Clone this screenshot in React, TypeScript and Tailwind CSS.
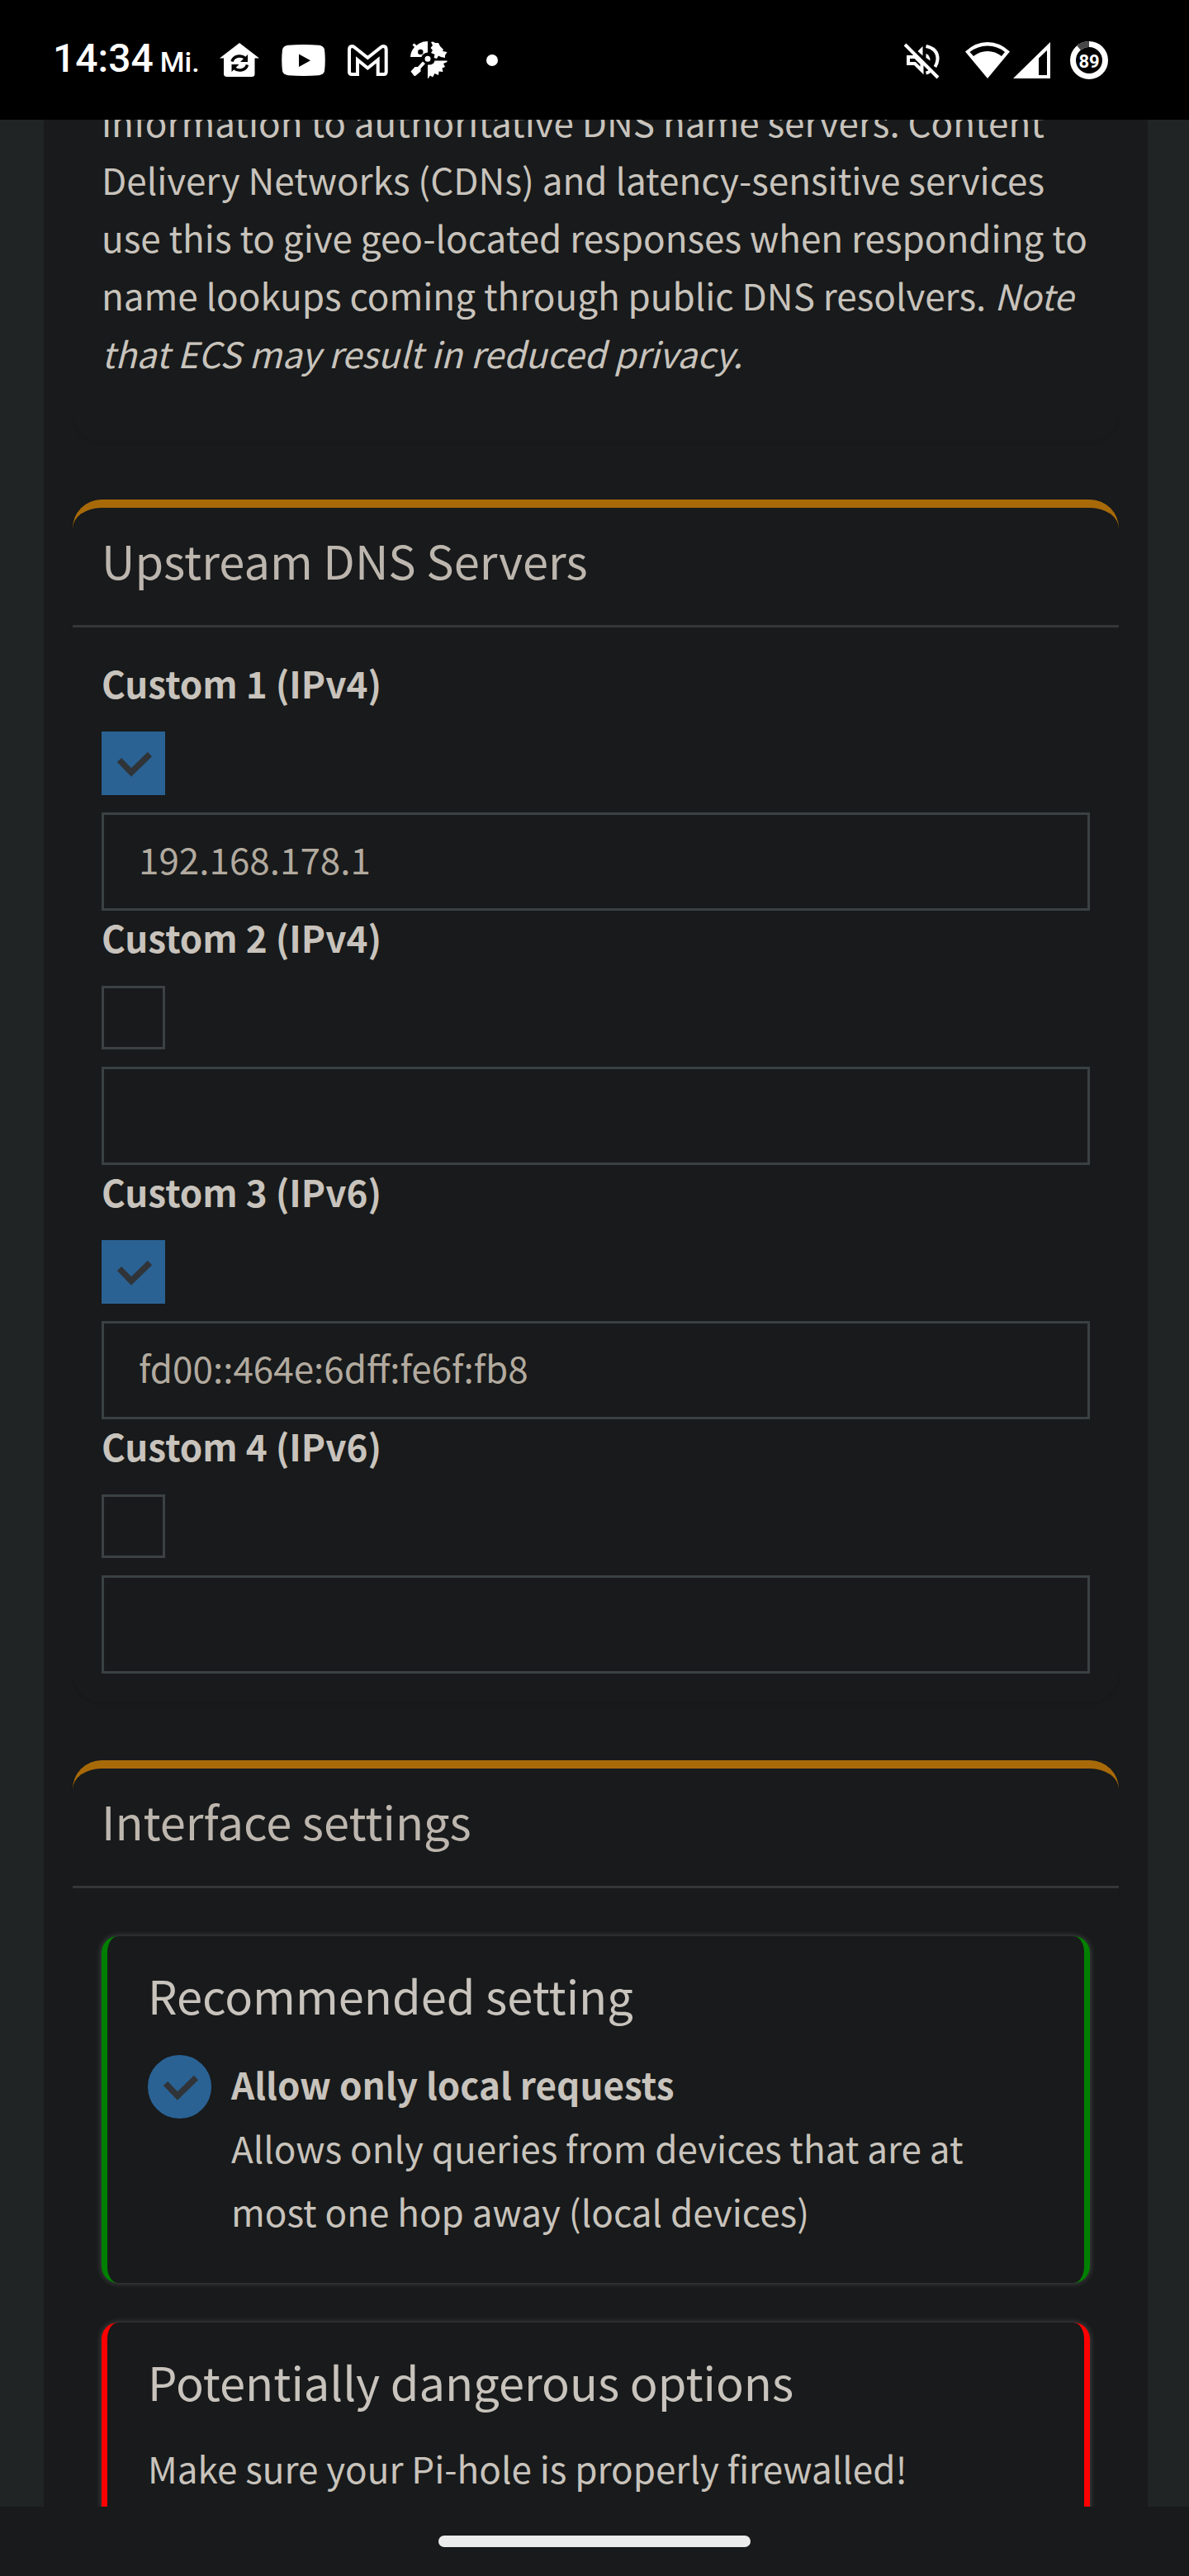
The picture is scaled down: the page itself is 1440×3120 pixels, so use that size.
import { useState } from "react"

type Upstream = { id: string, label: string, enabled: boolean, address: string }

const upstreams: Upstream[] = [
    { id: "custom1", label: "Custom 1 (IPv4)", enabled: true, address: "192.168.178.1" },
    { id: "custom2", label: "Custom 2 (IPv4)", enabled: false, address: "" },
    { id: "custom3", label: "Custom 3 (IPv6)", enabled: true, address: "fd00::464e:6dff:fe6f:fb8" },
    { id: "custom4", label: "Custom 4 (IPv6)", enabled: false, address: "" },
]

function CheckMark() {
    return (
        <svg className="pointer-events-none absolute inset-0 hidden peer-checked:block" viewBox="0 0 77 77" fill="none" aria-hidden="true">
            <path d="M21.5 34.5 36 49.5 58.5 27.5" stroke="#303438" strokeWidth="7.5" />
        </svg>
    )
}

function StatusBar() {
    return (
        <header className="flex h-[145px] shrink-0 items-center bg-black pl-16 pr-[98px] font-['Roboto',sans-serif] text-white">
            <div className="flex items-baseline gap-2 font-medium">
                <span className="text-[48px] leading-[56px]">14:34</span>
                <span className="text-[34px] leading-[56px]">Mi.</span>
            </div>

            {/* notifications */}
            <div className="ml-6 flex items-center gap-[27px]">
                <svg width="48" height="42" viewBox="0 0 48 42" aria-hidden="true">
                    <path d="M24 0 48 18.5H42.5V37.5Q42.5 41 39 41H9Q5 41 5 37.5V18.5H0Z" fill="#fff" />
                    <path d="M15 22.5A9.5 8.5 0 0 1 31 18.5M33.5 26.5A9.5 8.5 0 0 1 17.500 30.500" fill="none" stroke="#000" strokeWidth="3.5" />
                    <path d="M34 14V23H25ZM14.500 35V26H23.500Z" fill="#000" />
                </svg>
                <svg width="53" height="38" viewBox="0 0 53 38" aria-hidden="true">
                    <path d="M8 .8Q26.500-.8 45 .8Q51 1.500 52 6Q53.500 19 52 32Q51 36.500 45 37.200Q26.500 38.800 8 37.200Q2 36.500 1 32Q-.5 19 1 6Q2 1.500 8 .8Z" fill="#fff" />
                    <path d="M21 11.500 35 19.200 21 27Z" fill="#000" />
                </svg>
                <svg width="49" height="38" viewBox="0 0 49 38" fill="none" aria-hidden="true">
                    <path d="M12 18.500V36H5Q2 36 2 33V6Q2 2 5.500 2Q7 2 8.300 3.200L24.300 16 40.300 3.200Q41.700 2 43.200 2Q46.700 2 46.700 6V33Q46.700 36 43.700 36H36.700V18.500L24.300 28.500Z" stroke="#fff" strokeWidth="4" />
                </svg>
                <svg width="45" height="45" viewBox="0 0 45 45" fill="#fff" aria-hidden="true">
                    <path fillRule="evenodd" d="M21 0V13.500Q14.500 14.500 13.500 19H0Q.5 12 5 7L2.500 4.500 4.500 2.500 7.500 5Q13 0 21 0ZM12.300 9.700A3.200 3.200 0 1 0 12.300 16.100 3.200 3.200 0 1 0 12.300 9.700Z" />
                    <path d="M25 1Q28-.5 30 2L34 2 36 6 40 10 39 12 44.500 13 42 17 42 20 37 19 34 17.500 32 21 28.500 20 29.500 16 25 14 27 11 24.500 8 27 5Z" />
                    <circle cx="21" cy="21.300" r="3.500" />
                    <path d="M29.500 23.500H44.500V25L40 27 42 31 38.500 32.500 39.500 37 34.500 36.500 34 41 29.500 39 27 43.500 24 41.500 21.500 45H21V28.500Q28.500 29 29.500 23.500Z" />
                    <path d="M15 24.500 18 27 12.500 33 12.500 36.500 6 42Q4.500 42.500 3.500 40.500L.5 36.500 5.500 31 9 31Z" />
                </svg>
                <span className="ml-5 size-3.5 rounded-full bg-white" />
            </div>

            <div className="ml-auto flex items-center">
                <svg className="mr-7" width="46" height="46" viewBox="0 0 46 46" fill="none" stroke="#fff" aria-hidden="true">
                    <path d="M5 19V27H13L21.500 35.500V27L13.500 19Z" strokeWidth="4" />
                    <path d="M16.500 12 22.500 6V17.500Z" fill="#fff" stroke="none" />
                    <path d="M26.500 6Q41 9 40.500 22Q40 27 37.500 31M26.500 38.500Q29 38 31 36.500" strokeWidth="4" />
                    <path d="M26.500 15Q31.500 17 31.500 23.500L26.500 20Z" fill="#fff" stroke="none" />
                    <path d="M1 4 41 44" strokeWidth="4" />
                </svg>
                <svg className="mr-1" width="54" height="46" viewBox="0 0 54 46" aria-hidden="true">
                    <path fillRule="evenodd" d="M0 12.500Q12 1 27 1T54 12.500L27 45ZM5.500 13 10 18Q17.500 12 27 12T44 18L48 13Q39 5.500 27 5.500T5.500 13Z" fill="#fff" />
                </svg>
                <svg className="mr-6" width="45" height="46" viewBox="0 0 45 46" aria-hidden="true">
                    <path fillRule="evenodd" d="M0 45 45 1V45ZM31 20.500V41H41V11Z" fill="#fff" />
                </svg>
                <svg width="46" height="46" viewBox="0 0 46 46" aria-hidden="true">
                    <circle cx="23" cy="23" r="19.500" fill="none" stroke="#fff" strokeWidth="7" />
                    <path d="M10.500 8Q16 3.500 23 3.500" fill="none" stroke="#484848" strokeWidth="7" />
                    <text x="23" y="31.500" textAnchor="middle" fill="#fff" fontSize="22" fontWeight="700">89</text>
                </svg>
            </div>
        </header>
    )
}

function Box({ title, children }: { title: string, children: React.ReactNode }) {
    return (
        <section className="mb-[70px] rounded-[35px] border-t-[10px] border-[#a86a09] bg-[#181a1b] shadow-[0_3px_3px_rgba(0,0,0,0.06)]">
            <div className="border-b-[3px] border-[#343638] px-[35px] pt-[31px] pb-[47px]">
                <h3 className="text-[56px] leading-[64px] text-[#bdb6ae]">{title}</h3>
            </div>
            {children}
        </section>
    )
}

function UpstreamField({ server }: { server: Upstream }) {
    const [enabled, setEnabled] = useState(server.enabled)
    const [address, setAddress] = useState(server.address)

    return (
        <div>
            <label htmlFor={server.id} className="block font-bold leading-[64px]">{server.label}</label>
            <div className="relative mt-[27px] size-[77px]">
                <input
                    id={server.id}
                    type="checkbox"
                    checked={enabled}
                    onChange={e => setEnabled(e.target.checked)}
                    className="peer block size-full appearance-none border-[3px] border-[#3c4244] checked:border-[#2a6294] checked:bg-[#2a6294]"
                />
                <CheckMark />
            </div>
            <input
                type="text"
                aria-label={`${server.label} address`}
                value={address}
                onChange={e => setAddress(e.target.value)}
                className="mt-[21px] block h-[119px] w-full border-[3px] border-[#3a4142] bg-[#181a1b] px-[42px] pb-2 text-[#b2aa9f]"
            />
        </div>
    )
}

export default function App() {
    return (
        <div className="flex h-screen flex-col bg-[#181a1b] font-['Noto_Sans_CJK_SC',sans-serif] text-[44px] text-[#c8c3bc]">
            <StatusBar />

            <main className="min-h-0 grow overflow-hidden bg-[#202425] pl-[53px] pr-[50px]">
                {/* scrolled down, so the first line sits partly under the status bar */}
                <div className="-mt-[33px] bg-[#181a1b] px-[35px]">
                    <section className="mb-[70px] rounded-b-[35px] px-[35px] pb-[73px] shadow-[0_3px_3px_rgba(0,0,0,0.06)]">
                        <p className="leading-[70px]">
                            information to authoritative DNS name servers. Content Delivery Networks (CDNs) and
                            latency-sensitive services use this to give geo-located responses when responding to
                            name lookups coming through public DNS resolvers. <em className="text-[43px]">Note that ECS may result in reduced privacy.</em>
                        </p>
                    </section>

                    <Box title="Upstream DNS Servers">
                        <div className="p-[35px]">
                            {upstreams.map(server => <UpstreamField key={server.id} server={server} />)}
                        </div>
                    </Box>

                    <Box title="Interface settings">
                        <div className="px-[35px] pt-[58px]">
                            {/* recommended */}
                            <div className="mb-12 rounded-[20px] border-x-[7px] border-[#008000] px-[49px] pt-[39px] pb-12 shadow-[0_0_7px_rgba(200,200,200,0.3)]">
                                <h4 className="text-[56px] leading-[64px]">Recommended setting</h4>
                                <div className="mt-[38px] flex gap-6">
                                    <div className="relative mt-[3px] size-[77px] shrink-0">
                                        <input
                                            id="interface-local"
                                            type="radio"
                                            name="interface"
                                            defaultChecked
                                            className="peer block size-full appearance-none rounded-full border-[3px] border-[#3c4244] checked:border-[#2a6294] checked:bg-[#2a6294]"
                                        />
                                        <CheckMark />
                                    </div>
                                    <label htmlFor="interface-local" className="leading-[77px]">
                                        <strong className="block">Allow only local requests</strong>
                                        Allows only queries from devices that are at most one hop away (local devices)
                                    </label>
                                </div>
                            </div>

                            {/* dangerous */}
                            <div className="rounded-t-[20px] border-x-[7px] border-[#ff0000] px-[49px] pt-[39px] pb-12 shadow-[0_0_7px_rgba(200,200,200,0.3)]">
                                <h4 className="text-[56px] leading-[64px]">Potentially dangerous options</h4>
                                <p className="mt-[38px] leading-[70px]">Make sure your Pi-hole is properly firewalled!</p>
                            </div>
                        </div>
                    </Box>
                </div>
            </main>

            <footer className="flex h-[84px] shrink-0 items-center justify-center">
                <div className="h-3.5 w-[378px] rounded-full bg-[#ececec]" />
            </footer>
        </div>
    )
}
